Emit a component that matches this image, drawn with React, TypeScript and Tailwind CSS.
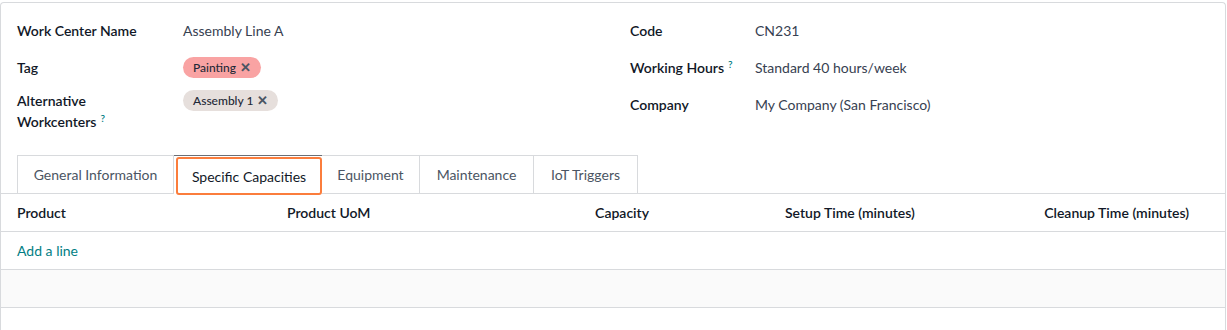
import React from 'react';

const Help = () => <sup className="ml-1 text-[10px] text-[#017e84] font-semibold">?</sup>;

const Tag = ({ label, className }: { label: string; className: string }) => (
  <span className={`inline-flex items-center gap-1 h-[21px] px-[10px] rounded-full text-[12px] font-medium text-[#1f2937] ${className}`}>
    {label}
    <span className="text-[13px] font-bold leading-none text-[#4b5563]">✕</span>
  </span>
);

const tabs = [
  { label: 'General Information', w: 'w-[157px] border-l' },
  { label: 'Specific Capacities', w: 'w-[148px]' },
  { label: 'Equipment', w: 'w-[98px]' },
  { label: 'Maintenance', w: 'w-[114px]' },
  { label: 'IoT Triggers', w: 'w-[104px]' },
];

export default function App() {
  return (
    <div className="bg-white h-[330px] pt-[2px] text-[14px] text-[#374151]" style={{ fontFamily: '"Segoe UI", Lato, "Noto Sans", sans-serif' }}>
      <div className="h-full border-l border-r border-t border-[#d8dadd] rounded-t-[4px] w-[1226px]">
        <div className="grid grid-cols-2 px-[16px] pt-[15px]">
          <div className="flex flex-col">
            <div className="flex h-[24px] items-center">
              <div className="w-[166px] font-semibold text-[#111827]">Work Center Name</div>
              <div>Assembly Line A</div>
            </div>
            <div className="flex items-center h-[21px] mt-[15px]">
              <div className="w-[166px] font-semibold text-[#111827]">Tag</div>
              <Tag label="Painting" className="bg-[#f9a3a3]" />
            </div>
            <div className="flex mt-[12px]">
              <div className="w-[166px] font-semibold text-[#111827] leading-[21px]">
                Alternative<br />Workcenters<Help />
              </div>
              <Tag label="Assembly 1" className="bg-[#e6dfdc]" />
            </div>
          </div>
          <div className="flex flex-col pl-[17px]">
            <div className="flex h-[24px] items-center">
              <div className="w-[125px] font-semibold text-[#111827]">Code</div>
              <div>CN231</div>
            </div>
            <div className="flex h-[24px] items-center mt-[13px]">
              <div className="w-[125px] font-semibold text-[#111827]">Working Hours<Help /></div>
              <div>Standard 40 hours/week</div>
            </div>
            <div className="flex h-[24px] items-center mt-[13px]">
              <div className="w-[125px] font-semibold text-[#111827]">Company</div>
              <div>My Company (San Francisco)</div>
            </div>
          </div>
        </div>

        <div className="flex mt-[23px] pl-[16px] border-b border-[#d8dadd] h-[39px]">
          {tabs.map((t, i) =>
            i === 1 ? (
              <div key={t.label} className={`relative -mb-px bg-white border-t border-[#6b6f75] pl-[2px] pt-[1px] ${t.w}`}>
                <div className="h-[38px] border-2 border-[#fb7d3c] rounded-[3px] flex items-center justify-center text-[#111827]">{t.label}</div>
              </div>
            ) : (
              <div key={t.label} className={`h-[38px] border-t border-r border-[#d8dadd] flex items-center justify-center text-[#4b5563] ${t.w}`}>
                {t.label}
              </div>
            )
          )}
        </div>

        <div className="grid grid-cols-[270px_220px_142px_255px_1fr] h-[38px] items-center border-b border-[#d8dadd] px-[16px] font-semibold text-[#111827]">
          <div>Product</div>
          <div>Product UoM</div>
          <div className="text-right">Capacity</div>
          <div className="pl-[136px] whitespace-nowrap">Setup Time (minutes)</div>
          <div className="text-right pr-[20px]">Cleanup Time (minutes)</div>
        </div>
        <div className="h-[38px] flex items-center px-[16px] border-b border-[#d8dadd] text-[#017e84]">Add a line</div>
        <div className="h-[38px] bg-[#fafafa] border-b border-[#d8dadd]" />
      </div>
    </div>
  );
}
